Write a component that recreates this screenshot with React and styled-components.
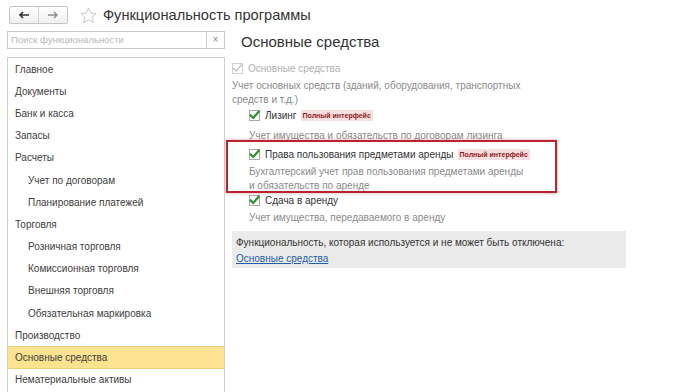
import styled, { createGlobalStyle } from "styled-components";

const GlobalStyle = createGlobalStyle`
  body {
    margin: 0;
    background: #fff;
    font-family: "Liberation Sans", Arial, sans-serif;
    color: #404040;
  }
`;

const sections = [
  { title: "Главное" },
  { title: "Документы" },
  { title: "Банк и касса" },
  { title: "Запасы" },
  { title: "Расчеты" },
  { title: "Учет по договорам", nested: true },
  { title: "Планирование платежей", nested: true },
  { title: "Торговля" },
  { title: "Розничная торговля", nested: true },
  { title: "Комиссионная торговля", nested: true },
  { title: "Внешняя торговля", nested: true },
  { title: "Обязательная маркировка", nested: true },
  { title: "Производство" },
  { title: "Основные средства", active: true },
  { title: "Нематериальные активы" },
];

const Check = ({ disabled }) => (
  <CheckBox $disabled={disabled}>
    <svg width="11" height="10" viewBox="0 0 11 10">
      <path
        d="M1.5 5.2 L4.2 8 L9.8 1.5"
        fill="none"
        stroke={disabled ? "#c4c4c4" : "#2f8f2f"}
        strokeWidth={disabled ? 1.4 : 2.2}
        strokeLinecap="round"
        strokeLinejoin="round"
      />
    </svg>
  </CheckBox>
);

export default function App() {
  return (
    <>
      <GlobalStyle />
      <Page>
        <Header>
          <NavGroup>
            <NavButton>
              <svg width="12" height="8" viewBox="0 0 12 8">
                <path d="M11 4H2M5 1L2 4l3 3" fill="none" stroke="#333" strokeWidth="1.6" />
              </svg>
            </NavButton>
            <NavButton $divider>
              <svg width="12" height="8" viewBox="0 0 12 8">
                <path d="M1 4h9M7 1l3 3-3 3" fill="none" stroke="#8a8a8a" strokeWidth="1.4" />
              </svg>
            </NavButton>
          </NavGroup>
          <Star viewBox="0 0 24 24">
            <path
              d="M12 2.5l2.9 6.3 6.8.7-5.1 4.6 1.5 6.8L12 17.4l-6.1 3.5 1.5-6.8L2.3 9.5l6.8-.7z"
              fill="none"
              stroke="#c2c2c2"
              strokeWidth="1.2"
              strokeLinejoin="round"
            />
          </Star>
          <Title>Функциональность программы</Title>
        </Header>

        <Main>
          <Sidebar>
            <Search>
              <SearchInput>Поиск функциональности</SearchInput>
              <ClearButton>×</ClearButton>
            </Search>
            <SectionList>
              {sections.map((s) => (
                <SectionItem key={s.title} $nested={s.nested} $active={s.active}>
                  {s.title}
                </SectionItem>
              ))}
            </SectionList>
          </Sidebar>

          <Content>
            <Heading>Основные средства</Heading>

            <OptionRow $top={7} $muted>
              <Check disabled />
              Основные средства
            </OptionRow>
            <Description $top={3}>
              Учет основных средств (зданий, оборудования, транспортных
              <br />
              средств и т.д.)
            </Description>

            <Nested>
              <OptionRow>
                <Check />
                Лизинг
                <Badge>Полный интерфейс</Badge>
              </OptionRow>
              <Description $top={6}>
                Учет имущества и обязательств по договорам лизинга
              </Description>

              <Highlighted>
                <OptionRow>
                  <Check />
                  Права пользования предметами аренды
                  <Badge>Полный интерфейс</Badge>
                </OptionRow>
                <Description $top={3} $lh={13.5}>
                  Бухгалтерский учет прав пользования предметами аренды
                  <br />
                  и обязательств по аренде
                </Description>
                <RedFrame />
              </Highlighted>

              <OptionRow>
                <Check />
                Сдача в аренду
              </OptionRow>
              <Description $top={3}>
                Учет имущества, передаваемого в аренду
              </Description>
            </Nested>

            <InfoPanel>
              <InfoText>
                Функциональность, которая используется и не может быть отключена:
              </InfoText>
              <InfoLink href="#">Основные средства</InfoLink>
            </InfoPanel>
          </Content>
        </Main>
      </Page>
    </>
  );
}

const Page = styled.div`
  width: 700px;
  height: 392px;
  overflow: hidden;
`;

const Header = styled.div`
  display: flex;
  align-items: center;
  height: 30px;
  padding-left: 9px;
`;

const NavGroup = styled.div`
  display: flex;
  height: 18px;
  border: 1px solid #c4c4c4;
  border-radius: 2px;
  background: linear-gradient(#ffffff, #f0f0f0);
  box-sizing: border-box;
`;

const NavButton = styled.div`
  width: 28px;
  display: flex;
  align-items: center;
  justify-content: center;
  border-left: ${(p) => (p.$divider ? "1px solid #d0d0d0" : "none")};
`;

const Star = styled.svg`
  width: 19px;
  height: 19px;
  margin-left: 11px;
`;

const Title = styled.div`
  margin-left: 5px;
  font-size: 14.6px;
  color: #333;
`;

const Main = styled.div`
  display: flex;
  padding-left: 7px;
  padding-top: 1px;
  gap: 7px;
`;

const Sidebar = styled.div`
  width: 218px;
  flex-shrink: 0;
`;

const Search = styled.div`
  display: flex;
  height: 18px;
  border: 1px solid #c8c8c8;
  box-sizing: border-box;
`;

const SearchInput = styled.div`
  flex: 1;
  padding-left: 3px;
  font-size: 9.5px;
  line-height: 16px;
  color: #b8b8b8;
`;

const ClearButton = styled.div`
  width: 17px;
  border-left: 1px solid #d0d0d0;
  text-align: center;
  font-size: 10px;
  line-height: 16px;
  color: #888;
`;

const SectionList = styled.div`
  margin-top: 8px;
  border: 1px solid #cfcfcf;
  height: 400px;
`;

const SectionItem = styled.div`
  height: 22.2px;
  display: flex;
  align-items: center;
  padding-left: ${(p) => (p.$nested ? "20px" : "7px")};
  font-size: 10px;
  color: #404040;
  box-sizing: border-box;
  background: ${(p) => (p.$active ? "#fbe38f" : "transparent")};
  border-top: 1px solid ${(p) => (p.$active ? "#ecd078" : "transparent")};
  border-bottom: 1px solid ${(p) => (p.$active ? "#ecd078" : "transparent")};
`;

const Content = styled.div`
  width: 394px;
`;

const Heading = styled.div`
  height: 22px;
  line-height: 22px;
  padding-left: 9px;
  font-size: 15px;
  color: #333;
`;

const OptionRow = styled.div`
  display: flex;
  align-items: center;
  height: 16px;
  margin-top: ${(p) => p.$top || 0}px;
  font-size: 10px;
  color: ${(p) => (p.$muted ? "#b0b0b0" : "#333")};
`;

const CheckBox = styled.span`
  width: 11px;
  height: 11px;
  margin-right: 5px;
  border: 1px solid ${(p) => (p.$disabled ? "#d0d0d0" : "#a8a8a8")};
  background: #fff;
  display: flex;
  align-items: center;
  justify-content: center;
  box-sizing: border-box;
  overflow: visible;
  svg {
    flex-shrink: 0;
    margin-top: -1px;
  }
`;

const Badge = styled.span`
  margin-left: 4px;
  padding: 0 2px;
  font-size: 7px;
  font-weight: bold;
  line-height: 11px;
  color: #8c1c24;
  background: #f8dfdf;
`;

const Description = styled.div`
  margin-top: ${(p) => p.$top || 0}px;
  font-size: 10px;
  line-height: ${(p) => p.$lh || 14}px;
  color: #8a8a8a;
`;

const Nested = styled.div`
  padding-left: 17px;
`;

const Highlighted = styled.div`
  position: relative;
  padding-top: 3px;
`;

const RedFrame = styled.div`
  position: absolute;
  left: -23px;
  top: -3px;
  width: 331px;
  height: 53px;
  border: 2px solid #b82530;
  box-sizing: border-box;
  box-shadow: 0 0 3px rgba(200, 30, 40, 0.45);
  pointer-events: none;
`;

const InfoPanel = styled.div`
  margin-top: 6px;
  height: 37px;
  padding: 4px 4px 0;
  box-sizing: border-box;
  background: #ebebeb;
`;

const InfoText = styled.div`
  font-size: 10px;
  line-height: 16px;
  color: #333;
`;

const InfoLink = styled.a`
  display: block;
  font-size: 10px;
  line-height: 16px;
  color: #1f5ea8;
  text-decoration: underline;
`;
